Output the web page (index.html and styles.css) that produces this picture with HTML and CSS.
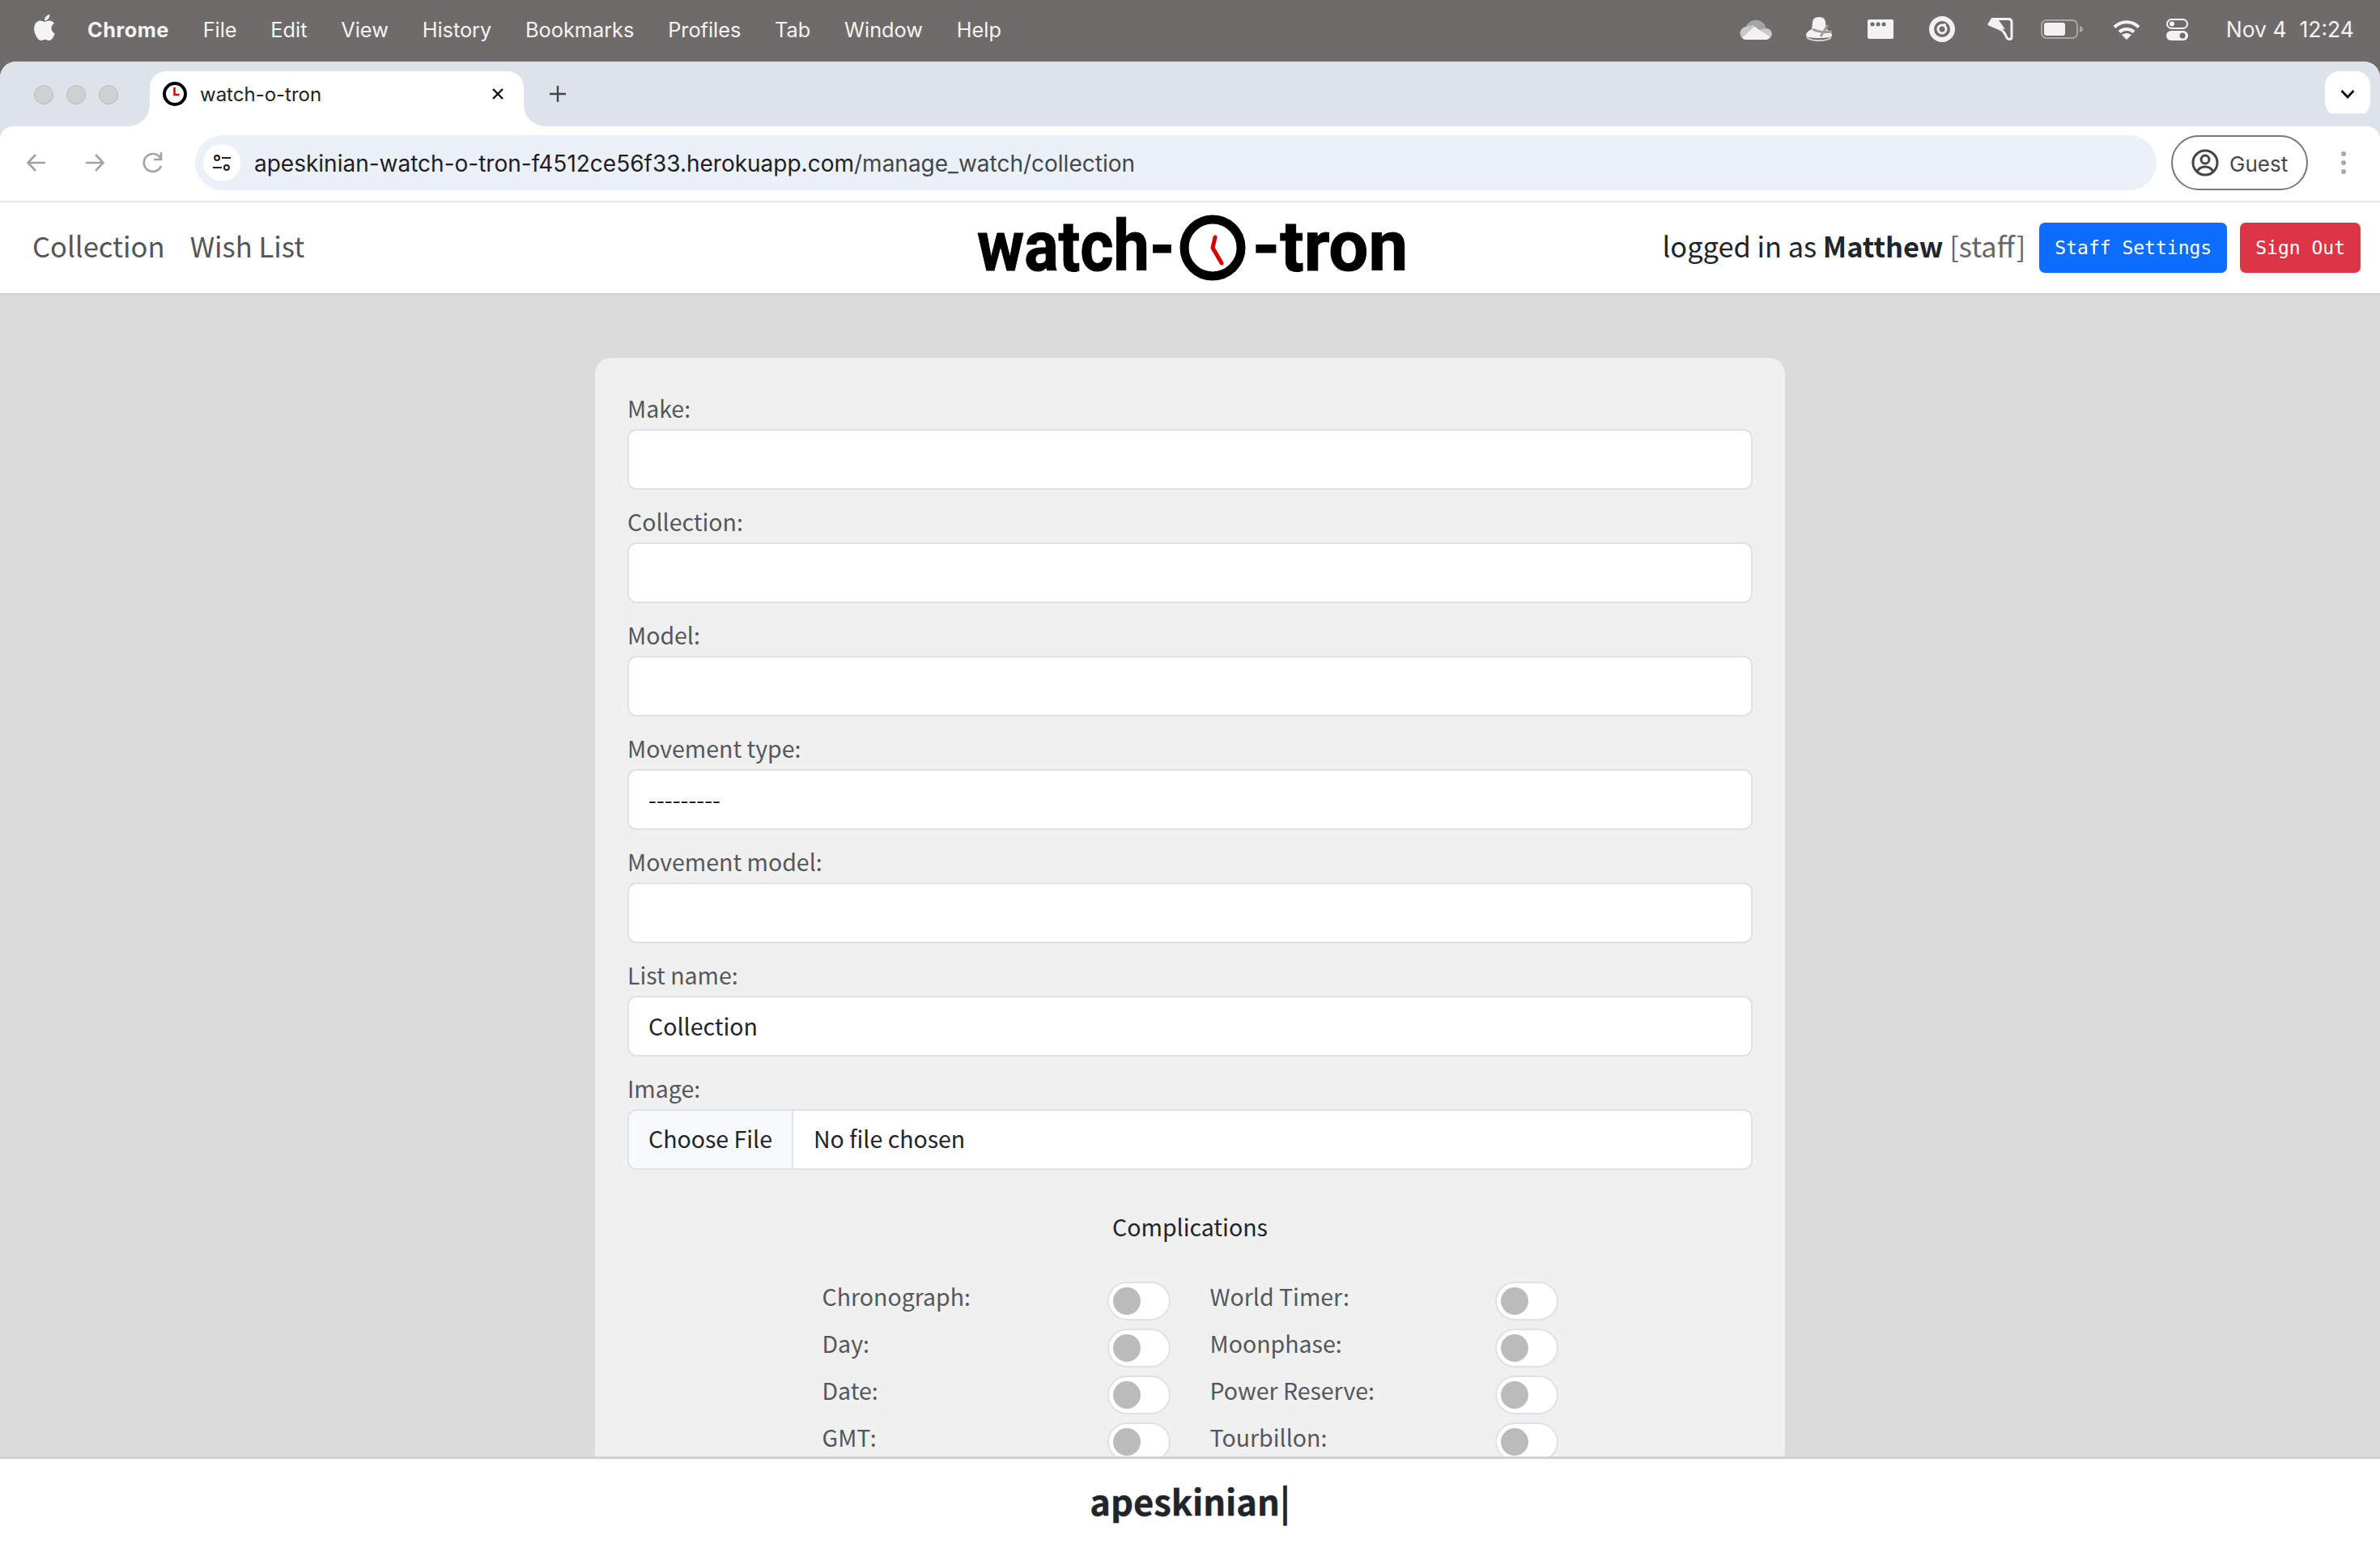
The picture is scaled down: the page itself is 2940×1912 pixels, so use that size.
FILE: index.html
```html
<!doctype html>
<html lang="en">
<head>
<meta charset="utf-8">
<title>watch-o-tron</title>
<link rel="stylesheet" href="styles.css">
</head>
<body>

<!-- macOS menu bar -->
<header class="menubar">
  <svg class="apple" width="32" height="34" viewBox="2.5 2.5 19 19" preserveAspectRatio="none"><path d="M17.05 20.28c-.98.95-2.05.8-3.08.35-1.09-.46-2.09-.48-3.24 0-1.44.62-2.2.44-3.06-.35C2.79 15.25 3.51 7.59 9.05 7.31c1.35.07 2.29.74 3.08.8 1.18-.24 2.31-.93 3.57-.84 1.51.12 2.65.72 3.4 1.8-3.12 1.87-2.38 5.98.48 7.13-.57 1.5-1.31 2.99-2.54 4.09zM12.03 7.25c-.15-2.23 1.66-4.07 3.74-4.25.29 2.58-2.34 4.5-3.74 4.25z"/></svg>
  <nav class="menus">
    <b>Chrome</b><span>File</span><span>Edit</span><span>View</span><span>History</span><span>Bookmarks</span><span>Profiles</span><span>Tab</span><span>Window</span><span>Help</span>
  </nav>
  <div class="status">
    <svg width="40" height="26" viewBox="0 0 40 26"><path fill="#c9c9c9" d="M9 26a8 8 0 0 1-1-16 13 13 0 0 1 24.500 2A7 7 0 0 1 33 26z"/><path fill="#a5a5a5" d="M8 10a13 13 0 0 1 15-8 13 13 0 0 1 9.500 10l-8 2-8-6z"/><path fill="#f2f2f2" d="M3 24 18 10l19 12q-1 4-5 4H8q-3 0-5-2z"/></svg>
    <svg width="34" height="30" viewBox="0 0 34 30"><path fill="#f2f2f2" d="M9 7q0-7 8-7t8 7l1 8q7 3 7 8 0 3-16 3T1 23q0-5 7-8z"/><path fill="none" stroke="#a09c9a" stroke-width="3" d="M19 24 28 10M9 15q10 5 24 3"/><path fill="none" stroke="#d8d8d8" stroke-width="2" d="M2 25q3 4 15 4t15-4"/></svg>
    <svg width="32" height="24" viewBox="0 0 32 24"><rect width="32" height="24" rx="2" fill="#f2f2f2"/><circle cx="6" cy="6" r="2.500" fill="#6f6b6a"/><circle cx="13" cy="6" r="2.500" fill="#6f6b6a"/><circle cx="20" cy="6" r="2.500" fill="#6f6b6a"/></svg>
    <svg width="32" height="32" viewBox="0 0 32 32"><circle cx="16" cy="16" r="13" fill="none" stroke="#f2f2f2" stroke-width="6"/><circle cx="16" cy="16" r="5" fill="none" stroke="#f2f2f2" stroke-width="3"/><circle cx="19" cy="11" r="2" fill="#f2f2f2"/></svg>
    <svg width="32" height="28" viewBox="0 0 32 28"><path fill="none" stroke="#f2f2f2" stroke-width="3" stroke-linejoin="round" d="M6 1.500h20q4 0 4 4v18q0 3-3 3-2 0-3-2-3-7-7-10L2 8z"/><path fill="#f2f2f2" d="M4 3h10L22 14 12 13 2 7z"/></svg>
    <svg width="52" height="24" viewBox="0 0 52 24"><rect x="1" y="1" width="44" height="22" rx="6" fill="none" stroke="#a8a6a5" stroke-width="2"/><rect x="4" y="4" width="26" height="16" rx="3" fill="#f2f2f2"/><path fill="#a8a6a5" d="M48 8q4 1 4 4t-4 4z"/></svg>
    <svg width="34" height="25" viewBox="0 0 34 25"><g fill="none" stroke="#f2f2f2" stroke-width="4"><path d="M2 9.500a21 21 0 0 1 30 0"/><path d="M8 15.500a13 13 0 0 1 18 0"/></g><path fill="#f2f2f2" d="M17 25l-6-6q6-4 12 0z"/></svg>
    <svg width="27" height="27" viewBox="0 0 27 27"><rect x="1" y="1" width="25" height="11" rx="5.500" fill="none" stroke="#f2f2f2" stroke-width="2"/><circle cx="7" cy="6.500" r="3" fill="#f2f2f2"/><rect y="15" width="27" height="12" rx="6" fill="#f2f2f2"/><circle cx="20" cy="21" r="3.500" fill="#6f6b6a"/></svg>
    <div class="clock"><span>Nov 4</span><span>12:24</span></div>
  </div>
</header>

<div class="window">

  <div class="tabstrip">
    <div class="lights"><i></i><i></i><i></i></div>
    <div class="tab">
      <svg width="30" height="30" viewBox="0 0 30 30"><circle cx="15" cy="15" r="13" fill="#fff" stroke="#000" stroke-width="4"/><path d="M14.500 7v9h6" fill="none" stroke="#d40000" stroke-width="2.500"/></svg>
      <span class="tab-title">watch-o-tron</span>
      <svg class="tab-x" width="16" height="16" viewBox="0 0 16 16"><path d="M2 2l12 12M14 2 2 14" stroke="#111" stroke-width="2.400"/></svg>
    </div>
    <svg class="tab-plus" width="22" height="22" viewBox="0 0 22 22"><path d="M11 1v20M1 11h20" stroke="#444" stroke-width="2.400"/></svg>
    <div class="tab-menu"><svg width="18" height="12" viewBox="0 0 18 12"><path d="M1.500 2 9 10l7.500-8" fill="none" stroke="#111" stroke-width="2.800"/></svg></div>
  </div>

  <div class="toolbar">
    <div class="navbtns">
      <svg width="26" height="26" viewBox="0 0 26 26"><path d="M24 13H3M12 3 2.500 13 12 23" fill="none" stroke="#a3a3a3" stroke-width="2.600"/></svg>
      <svg width="26" height="26" viewBox="0 0 26 26"><path d="M2 13h21M14 3l9.500 10L14 23" fill="none" stroke="#a3a3a3" stroke-width="2.600"/></svg>
      <svg width="26" height="28" viewBox="0 0 26 28"><path d="M23 18a11 11 0 1 1-1-10" fill="none" stroke="#a3a3a3" stroke-width="2.600"/><path d="M23 1v9h-9" fill="none" stroke="#a3a3a3" stroke-width="2.600"/></svg>
    </div>
    <div class="omnibox">
      <div class="site-btn"><svg width="26" height="26" viewBox="0 0 26 26"><g fill="none" stroke="#222" stroke-width="2.400"><circle cx="6" cy="6" r="3.500"/><path d="M13 6h13M0 20h13"/><circle cx="20" cy="20" r="3.500"/></g></svg></div>
      <span class="url"><span class="host">apeskinian-watch-o-tron-f4512ce56f33.herokuapp.com</span>/manage_watch/collection</span>
    </div>
    <div class="guest">
      <svg width="34" height="34" viewBox="0 0 34 34"><circle cx="17" cy="17" r="15" fill="none" stroke="#444" stroke-width="3"/><circle cx="17" cy="13" r="5" fill="none" stroke="#444" stroke-width="3"/><path d="M7 28q3-6 10-6t10 6" fill="none" stroke="#444" stroke-width="3"/></svg>
      <span>Guest</span>
    </div>
    <div class="kebab"><i></i><i></i><i></i></div>
  </div>

  <header class="topbar">
    <nav class="mainnav"><a>Collection</a><a>Wish List</a></nav>
    <div class="logo">
      <span class="logo-word logo-left">watch-</span>
      <svg class="logo-clock" width="82" height="82" viewBox="0 0 82 82"><circle cx="41" cy="41" r="35" fill="#fff" stroke="#000" stroke-width="11"/><path d="M44 28 41 41 52 60" fill="none" stroke="#d40000" stroke-width="5" stroke-linecap="round" stroke-linejoin="round"/></svg>
      <span class="logo-word logo-right">-tron</span>
    </div>
    <div class="account">
      <span class="who">logged in as <b>Matthew</b> <span class="role">[staff]</span></span>
      <a class="btn btn-blue">Staff Settings</a>
      <a class="btn btn-red">Sign Out</a>
    </div>
  </header>

  <main class="page">
    <form class="card">
      <div class="field"><label for="make">Make:</label><input id="make" type="text"></div>
      <div class="field"><label for="coll">Collection:</label><input id="coll" type="text"></div>
      <div class="field"><label for="model">Model:</label><input id="model" type="text"></div>
      <div class="field"><label for="mtype">Movement type:</label>
        <select id="mtype"><option>---------</option></select></div>
      <div class="field"><label for="mmodel">Movement model:</label><input id="mmodel" type="text"></div>
      <div class="field"><label for="lname">List name:</label><input id="lname" type="text" value="Collection"></div>
      <div class="field"><label for="img">Image:</label><input id="img" type="file"></div>

      <h2 class="comp-title">Complications</h2>
      <div class="comp-grid">
        <label class="comp">Chronograph:<input type="checkbox"></label>
        <label class="comp">World Timer:<input type="checkbox"></label>
        <label class="comp">Day:<input type="checkbox"></label>
        <label class="comp">Moonphase:<input type="checkbox"></label>
        <label class="comp">Date:<input type="checkbox"></label>
        <label class="comp">Power Reserve:<input type="checkbox"></label>
        <label class="comp">GMT:<input type="checkbox"></label>
        <label class="comp">Tourbillon:<input type="checkbox"></label>
      </div>
    </form>
  </main>

  <footer class="foot">apeskinian|</footer>
</div>

</body>
</html>
```

FILE: styles.css
```css
* { box-sizing: border-box; }
html, body { margin: 0; height: 100%; }
body {
  height: 1912px;
  overflow: hidden;
  display: flex;
  flex-direction: column;
  background: #6f6b6a;
  font-family: "Noto Sans CJK SC", "Noto Sans", sans-serif;
  font-size: 28.5px;
  color: #212529;
}

/* menu bar */
.menubar {
  height: 76px;
  flex: none;
  display: flex;
  align-items: center;
  padding: 0 32px 4px 39px;
  color: #f4f4f4;
  font-family: Inter, sans-serif;
  font-size: 25.3px;
}
.apple { fill: #f4f4f4; margin-bottom: 4px; }
.menus { display: flex; gap: 41.8px; margin-left: 37px; }
.menus b { font-weight: 700; letter-spacing: .5px; }
.status { margin-left: auto; display: flex; align-items: center; }
.status svg { display: block; flex: none; }
.status > :nth-child(2) { margin-left: 41px; }
.status > :nth-child(3) { margin-left: 43px; }
.status > :nth-child(4) { margin-left: 44px; }
.status > :nth-child(5) { margin-left: 40px; }
.status > :nth-child(6) { margin-left: 34px; }
.status > :nth-child(7) { margin-left: 37px; }
.status > :nth-child(8) { margin-left: 32px; }
.clock { display: flex; gap: 16px; margin-left: 47px; font-size: 26.5px; }

/* browser window */
.window {
  flex: 1;
  min-height: 0;
  display: flex;
  flex-direction: column;
  background: #fff;
  border-radius: 20px 20px 0 0;
  overflow: hidden;
}
.tabstrip {
  height: 80px;
  flex: none;
  display: flex;
  align-items: flex-end;
  background: #dee2ea;
  padding-left: 42px;
}
.lights { display: flex; gap: 16px; align-self: center; margin-top: 2px; width: 143px; }
.lights i {
  width: 24px;
  height: 24px;
  border-radius: 50%;
  background: #cfd0d2;
  border: 1px solid #b9babc;
}
.tab {
  position: relative;
  width: 462px;
  height: 68px;
  display: flex;
  align-items: center;
  padding: 0 24px 12px 16px;
  background: #fff;
  border-radius: 20px 20px 0 0;
  font-family: Inter, sans-serif;
  font-size: 24px;
  color: #222;
}
.tab::before, .tab::after {
  content: "";
  position: absolute;
  bottom: 0;
  width: 26px;
  height: 26px;
}
.tab::before { left: -26px; background: radial-gradient(circle at 0 0, #dee2ea 25.500px, #fff 26px); }
.tab::after { right: -26px; background: radial-gradient(circle at 100% 0, #dee2ea 25.500px, #fff 26px); }
.tab-title { margin-left: 16px; }
.tab-x { margin-left: auto; }
.tab-plus { margin: 0 0 29px 31px; }
.tab-menu {
  margin: 0 12px 12px auto;
  width: 56px;
  height: 56px;
  border-radius: 18px;
  background: #fff;
  display: flex;
  align-items: center;
  justify-content: center;
}

.toolbar {
  height: 94px;
  flex: none;
  display: flex;
  align-items: center;
  background: #fff;
  border-bottom: 2px solid #e6e6e6;
  border-radius: 16px 16px 0 0;
  padding-bottom: 2px;
  box-shadow: 0 -16px 0 #dee2ea;
}
.navbtns { display: flex; gap: 46px; width: 241px; padding-left: 32px; align-items: center; }
.omnibox {
  width: 2423px;
  height: 68px;
  display: flex;
  align-items: center;
  padding-left: 10px;
  background: #ebf0f9;
  border-radius: 34px;
  font-family: Inter, sans-serif;
  font-size: 28px;
  color: #474747;
}
.site-btn {
  width: 46px;
  height: 46px;
  border-radius: 50%;
  background: #fff;
  display: flex;
  align-items: center;
  justify-content: center;
}
.site-btn svg { width: 22px; height: 22px; }
.url { margin-left: 17px; padding-top: 2px; }
.host { color: #1f1f1f; }
.guest {
  margin-left: 18px;
  width: 169px;
  height: 68px;
  display: flex;
  align-items: center;
  gap: 13px;
  padding-left: 23px;
  border: 2px solid #777;
  border-radius: 34px;
  font-family: Inter, sans-serif;
  font-size: 26px;
  color: #474747;
}
.guest span { padding-top: 2px; }
.kebab {
  margin-left: 41px;
  display: flex;
  flex-direction: column;
  gap: 5px;
}
.kebab i { width: 6px; height: 6px; border-radius: 50%; background: #a8a8a8; }

/* site header */
.topbar {
  height: 115px;
  flex: none;
  display: grid;
  grid-template-columns: 1fr auto 1fr;
  align-items: center;
  background: #fff;
  border-bottom: 3px solid #d4d4d4;
}
.mainnav { display: flex; gap: 31px; padding-left: 40px; margin-bottom: 6px; font-size: 34.6px; color: #555; }
.logo { display: flex; align-items: center; gap: 7px; }
.logo-word {
  display: block;
  margin-bottom: 4px;
  white-space: nowrap;
  transform-origin: left center;
  font-family: Roboto, sans-serif;
  font-weight: 700;
  font-size: 87px;
  line-height: 82px;
  color: #000;
  -webkit-text-stroke: 1px #000;
}
.logo-left { width: 243px; transform: scaleX(.91); }
.logo-right { width: 186px; margin-left: 1px; transform: scaleX(1); }
.logo-clock { display: block; }
.account { display: flex; align-items: center; justify-content: flex-end; gap: 16px; padding-right: 24px; }
.who { font-size: 34.4px; margin: 0 1px 6px 0; }
.who b { font-weight: 700; }
.role { color: #666; }
.btn {
  height: 62px;
  display: flex;
  align-items: center;
  padding: 0 19px;
  border-radius: 7px;
  font-family: "DejaVu Sans Mono", monospace;
  font-size: 23px;
  color: #fff;
}
.btn-blue { background: #0d6efd; }
.btn-red { background: #dc3545; }

/* form */
.page {
  flex: 1;
  min-height: 0;
  overflow: hidden;
  background: #dbdbdb;
  padding-top: 77px;
}
.card {
  width: 1470px;
  margin: 0 auto;
  padding: 41px 40px 60px;
  background: #f0f0f0;
  border-radius: 20px;
}
.field { margin-bottom: 18px; }
.field label {
  display: block;
  margin-bottom: 6px;
  line-height: 41px;
  color: #54585c;
}
.field input, .field select {
  display: block;
  width: 100%;
  height: 75px;
  padding: 0 24px 3px;
  background: #fff;
  border: 2px solid #dee2e6;
  border-radius: 11px;
  font: inherit;
  color: #212529;
  appearance: none;
  outline: 0;
}
.field input[type="file"] { padding: 0; line-height: 68px; overflow: hidden; }
.field input[type="file"]::file-selector-button {
  height: 71px;
  margin: 0 25px 0 0;
  padding: 0 24px 3px;
  background: #f8f9fa;
  border: 0;
  border-right: 2px solid #dee2e6;
  font: inherit;
  color: #212529;
}
.comp-title {
  margin: 47px 0 0;
  font-size: 28.5px;
  font-weight: 400;
  line-height: 45px;
  text-align: center;
}
.comp-grid {
  display: grid;
  grid-template-columns: 430px 430px;
  justify-content: center;
  column-gap: 49px;
  margin-top: 44px;
}
.comp {
  height: 58px;
  display: flex;
  justify-content: space-between;
  color: #54585c;
  line-height: 40px;
}
.comp input {
  position: relative;
  width: 78px;
  height: 48px;
  margin: 2px 0 0;
  background: #fff;
  border: 2px solid #dee2e6;
  border-radius: 24px;
  appearance: none;
}
.comp input::before {
  content: "";
  position: absolute;
  left: 5px;
  top: 5px;
  width: 34px;
  height: 34px;
  border-radius: 50%;
  background: #bbb;
}

.foot {
  height: 113px;
  flex: none;
  padding-bottom: 8px;
  background: #fff;
  border-top: 3px solid #d0d0d0;
  display: flex;
  align-items: center;
  justify-content: center;
  font-size: 43.5px;
  font-weight: 700;
  color: #212529;
  -webkit-text-stroke: .4px #212529;
}
```
